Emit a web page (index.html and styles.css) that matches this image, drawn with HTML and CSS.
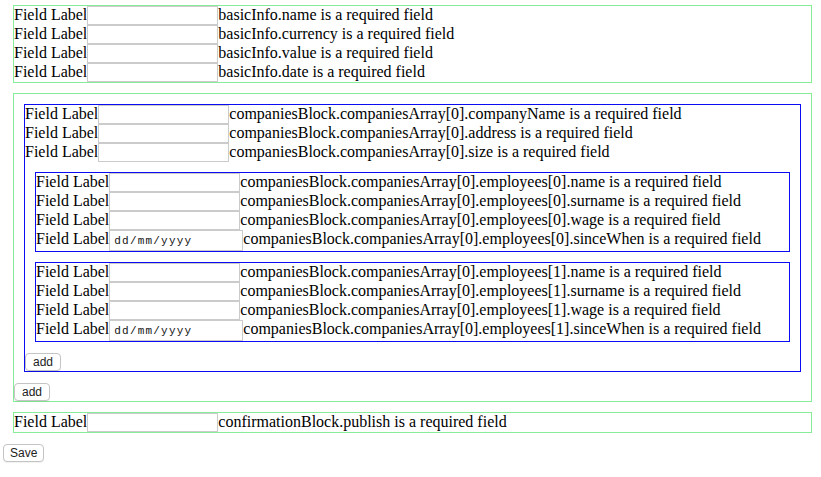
FILE: index.html
```html
<html>
<head>
<title>Form</title>
<link rel="stylesheet" href="styles.css">
</head>
<body>

<form name="company">
  <div class="block">
    <div class="field"><label>Field Label</label><input class="text" type="text"/><span class="error">basicInfo.name is a required field</span></div>
    <div class="field"><label>Field Label</label><input class="text" type="text"/><span class="error">basicInfo.currency is a required field</span></div>
    <div class="field"><label>Field Label</label><input class="text" type="text"/><span class="error">basicInfo.value is a required field</span></div>
    <div class="field"><label>Field Label</label><input class="text" type="text"/><span class="error">basicInfo.date is a required field</span></div>
  </div>

  <div class="block">
    <div class="group outer">
      <div class="field"><label>Field Label</label><input class="text" type="text"/><span class="error">companiesBlock.companiesArray[0].companyName is a required field</span></div>
      <div class="field"><label>Field Label</label><input class="text" type="text"/><span class="error">companiesBlock.companiesArray[0].address is a required field</span></div>
      <div class="field"><label>Field Label</label><input class="text" type="text"/><span class="error">companiesBlock.companiesArray[0].size is a required field</span></div>

      <div class="group">
        <div class="field"><label>Field Label</label><input class="text" type="text"/><span class="error">companiesBlock.companiesArray[0].employees[0].name is a required field</span></div>
        <div class="field"><label>Field Label</label><input class="text" type="text"/><span class="error">companiesBlock.companiesArray[0].employees[0].surname is a required field</span></div>
        <div class="field"><label>Field Label</label><input class="text" type="text"/><span class="error">companiesBlock.companiesArray[0].employees[0].wage is a required field</span></div>
        <div class="field date-field"><label>Field Label</label><input class="text date" type="text" placeholder="dd/mm/yyyy"/><span class="error">companiesBlock.companiesArray[0].employees[0].sinceWhen is a required field</span></div>
      </div>

      <div class="group">
        <div class="field"><label>Field Label</label><input class="text" type="text"/><span class="error">companiesBlock.companiesArray[0].employees[1].name is a required field</span></div>
        <div class="field"><label>Field Label</label><input class="text" type="text"/><span class="error">companiesBlock.companiesArray[0].employees[1].surname is a required field</span></div>
        <div class="field"><label>Field Label</label><input class="text" type="text"/><span class="error">companiesBlock.companiesArray[0].employees[1].wage is a required field</span></div>
        <div class="field date-field"><label>Field Label</label><input class="text date" type="text" placeholder="dd/mm/yyyy"/><span class="error">companiesBlock.companiesArray[0].employees[1].sinceWhen is a required field</span></div>
      </div>

      <button type="button" class="btn">add</button>
    </div>
    <button type="button" class="btn">add</button>
  </div>

  <div class="block">
    <div class="field"><label>Field Label</label><input class="text" type="text"/><span class="error">confirmationBlock.publish is a required field</span></div>
  </div>

  <button type="button" class="btn btn-save">Save</button>
</form>

</body>
</html>
```

FILE: styles.css
```css
body {
  font-family: "Liberation Serif", "Times New Roman", serif;
  font-size: 16px;
  color: #000;
  margin: 5px 0 0 3px;
}

form {
  margin: 0;
}

.block {
  border: 1px solid #88ec98;
  margin: 0 9px 10px 10px;
}

.group {
  border: 1px solid #0c0cf2;
  margin: 10px;
}

.field {
  display: flex;
  align-items: flex-start;
  height: 19px;
  line-height: 17px;
  white-space: nowrap;
}

.field.date-field {
  height: 21px;
}

.field label {
  display: block;
}

.text {
  box-sizing: border-box;
  width: 131px;
  height: 19px;
  margin: 0;
  padding: 0 4px;
  border: 1px solid #cbcbcb;
  background: #fff;
  font-family: "Liberation Sans", Arial, sans-serif;
  font-size: 12px;
  outline: none;
}

.text.date {
  width: 134px;
  height: 21px;
  font-family: "Liberation Mono", "Courier New", monospace;
  font-size: 11px;
  letter-spacing: 1.2px;
}

.text.date::placeholder {
  color: #111;
  opacity: 1;
}

.btn {
  display: block;
  box-sizing: border-box;
  height: 18px;
  margin: 11px 0 0 0;
  padding: 0 7px;
  border: 1px solid #c4c4c4;
  border-radius: 4px;
  background: #fff;
  box-shadow: 0 1px 1px rgba(0, 0, 0, 0.06);
  font-family: "Liberation Sans", Arial, sans-serif;
  font-size: 12px;
  line-height: 16px;
  color: #222;
}

.btn-save {
  padding: 0 6px;
}
```
